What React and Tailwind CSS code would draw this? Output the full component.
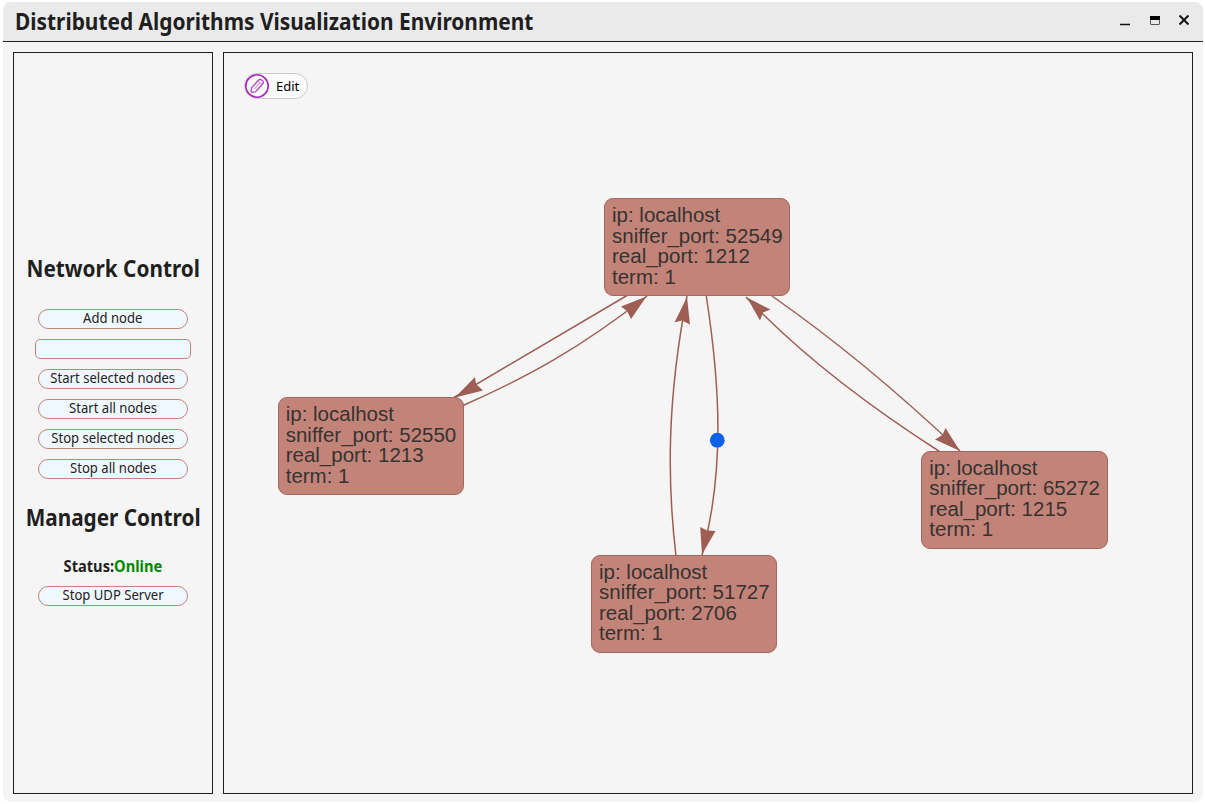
const nodes = [
  { ip: "localhost", sniffer: 52549, real: 1212, term: 1, place: "left-[380px] top-[145.3px]" },
  { ip: "localhost", sniffer: 52550, real: 1213, term: 1, place: "left-[53.7px] top-[344.3px]" },
  { ip: "localhost", sniffer: 65272, real: 1215, term: 1, place: "left-[697.3px] top-[398px]" },
  { ip: "localhost", sniffer: 51727, real: 2706, term: 1, place: "left-[367px] top-[502px]" },
];

const edges = [
  { path: "M627 295.5 Q548 342 454 397.5", head: "455,397.5 475,377 476,384 483,390.5" },
  { path: "M463 405.5 C530 376 580 348 647 296", head: "646.5,296.5 621,306.5 627,311 631,319" },
  { path: "M676 556 C667 480 667 400 687 296", head: "687,297 674.5,322.5 682,320.5 690,324.5" },
  { path: "M706.3 296 C720 385 725 470 702 555.5", head: "702,554.5 700.2,527 707,530.5 715.5,531" },
  { path: "M939.5 451.5 C870 407 803 357 746 297", head: "747,297.5 770.5,309.5 763,312.5 760,320.5" },
  { path: "M772 296 Q865 361 960 451", head: "960,451 945.5,428 942.5,435 935,439.5" },
];

function Node({ node }) {
  return (
    <div
      className={`absolute ${node.place} h-[97.5px] w-[186.3px] whitespace-nowrap rounded-[9px] border border-[#a7655b] bg-[#c28379] pl-[7px] pt-[5.8px] font-['Liberation_Sans',sans-serif] text-[20.5px] leading-[20.5px] text-[#373330]`}
    >
      <div>ip: {node.ip}</div>
      <div>sniffer_port: {node.sniffer}</div>
      <div>real_port: {node.real}</div>
      <div>term: {node.term}</div>
    </div>
  );
}

function Button({ children }) {
  return (
    <button className="flex h-5 w-[150px] items-center justify-center rounded-full border border-[#c28379] bg-[#f0f8ff] pb-[2px] text-sm leading-none text-[#222]">
      <span className="inline-block origin-center scale-x-[.935] whitespace-nowrap">{children}</span>
    </button>
  );
}

function Heading({ children }) {
  return (
    <h2 className="flex justify-center text-2xl leading-8 font-bold text-[#1f1f1f]">
      <span className="scale-x-[.865] whitespace-nowrap">{children}</span>
    </h2>
  );
}

export default function App() {
  return (
    <div className="h-[804px] w-[1205px] overflow-hidden bg-white pl-[3px] pt-[2px] font-['Noto_Sans',sans-serif]">
      <div className="flex h-[800px] w-[1200px] flex-col overflow-hidden rounded-lg bg-[#f5f5f5]">
        <header className="flex h-10 shrink-0 items-center justify-between border-b border-[#1f1f1f] bg-[#eaeaea] pl-3 pr-[13px]">
          <h1 className="origin-left scale-x-[.87] whitespace-nowrap pb-[2px] text-2xl font-bold text-[#1f1f1f]">
            Distributed Algorithms Visualization Environment
          </h1>
          <div className="flex items-center pb-[3px]">
            <svg className="mr-[18px] h-3 w-3" viewBox="0 0 12 12"><path d="M1 10.5h10" stroke="#111" strokeWidth="1.5" /></svg>
            <svg className="mr-[17px] h-3 w-3" viewBox="0 0 12 12"><rect x="1.5" y="2.5" width="9" height="8" rx=".5" fill="none" stroke="#555" /><path d="M1 2h10v4H1z" fill="#000" /></svg>
            <svg className="h-3 w-3" viewBox="0 0 12 12"><path d="M1.5 1.5l9 9M10.5 1.5l-9 9" stroke="#111" strokeWidth="1.9" /></svg>
          </div>
        </header>
        <div className="flex gap-2.5 px-2.5 pt-2.5">
          <aside className="flex h-[742px] w-[200px] flex-col items-center border border-[#1f1f1f] pt-[199px]">
            <Heading>Network Control</Heading>
            <div className="mt-[25px] flex flex-col items-center gap-2.5">
              <Button>Add node</Button>
              <input className="h-5 w-[156px] rounded-[5px] border border-[#c28379] bg-[#f0f8ff]" />
              <Button>Start selected nodes</Button>
              <Button>Start all nodes</Button>
              <Button>Stop selected nodes</Button>
              <Button>Stop all nodes</Button>
            </div>
            <div className="mt-[22px]"><Heading>Manager Control</Heading></div>
            <div className="mt-[21px] flex h-6 items-center justify-center text-base font-bold text-[#1f1f1f]">
              <span className="scale-x-[.915] whitespace-nowrap">Status:<span className="text-[#008800]">Online</span></span>
            </div>
            <div className="mt-2"><Button>Stop UDP Server</Button></div>
          </aside>
          <main className="relative h-[742px] w-[970px] border border-[#1f1f1f] pl-5 pt-5">
            <button className="flex h-[26px] w-16 items-center rounded-full border border-[#ccc] bg-[#fcfcfc] text-[13px] text-black">
              <svg className="h-6 w-6 shrink-0" viewBox="0 0 24 24" fill="none" stroke="#b94fcd">
                <circle cx="12" cy="12" r="11.2" stroke="#a32bbb" strokeWidth="1.6" />
                <g transform="rotate(42 12 12)" strokeWidth="1.4" strokeLinejoin="round">
                  <path d="M9.2 6.5a2 2 0 0 1 2-2h1.6a2 2 0 0 1 2 2v10.5L12.8 20h-1.6l-2-3z" />
                  <path d="M9.2 7.5h5.6M12 8v8" strokeWidth="1" strokeOpacity=".65" />
                </g>
              </svg>
              <span className="pl-[7px] pt-px">Edit</span>
            </button>
            <svg className="absolute left-0 top-0 h-[740px] w-[968px]" viewBox="224 53 968 740" fill="none">
              {edges.map((edge) => (
                <g key={edge.path}>
                  <path d={edge.path} stroke="#9e5e54" strokeWidth="1.5" />
                  <polygon points={edge.head} fill="#9e5e54" />
                </g>
              ))}
              <circle cx="717.3" cy="440.2" r="7.4" fill="#1060e8" />
            </svg>
            {nodes.map((node) => (
              <Node key={node.sniffer} node={node} />
            ))}
          </main>
        </div>
      </div>
    </div>
  );
}
